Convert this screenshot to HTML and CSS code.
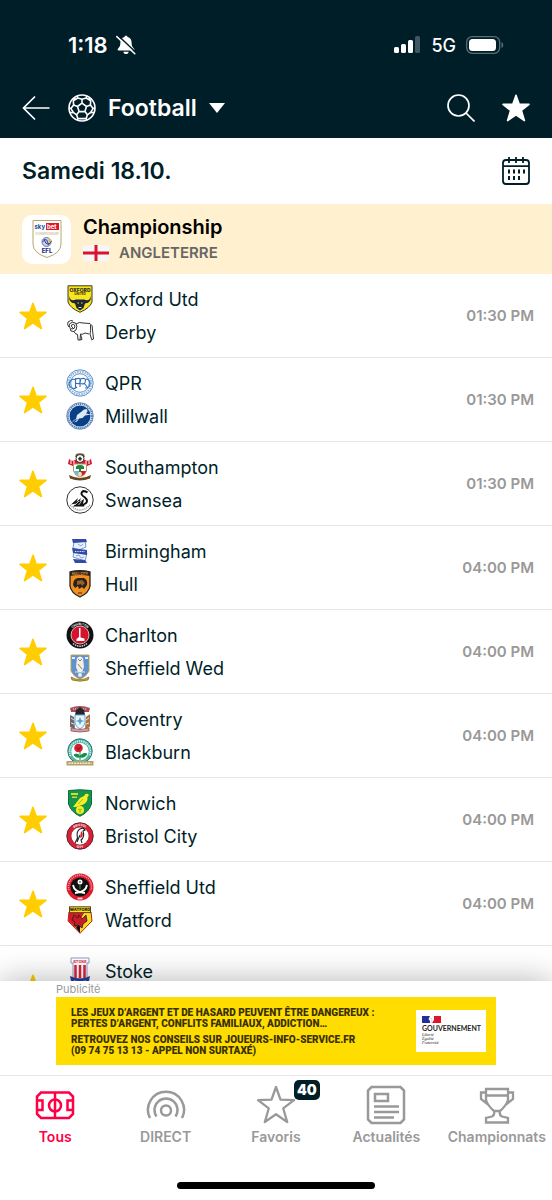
FILE: index.html
```html
<!DOCTYPE html>
<html lang="fr">
<head>
    <meta charset="UTF-8">
    <meta name="viewport" content="width=device-width, initial-scale=1.0">
    <title>Football</title>
    <link rel="stylesheet" href="styles.css">
</head>
<body>
    <svg class="defs" aria-hidden="true">
        <symbol id="star" viewBox="0 0 28 28">
            <path d="M14 1.2 17.2 10.2 27 10.4 19.4 16.4 22.4 26.6 14 20.8 5.6 26.6 8.6 16.4 1 10.4 10.8 10.2Z" stroke-width="1.6" stroke-linejoin="round"/>
        </symbol>
    </svg>

    <header class="header">
        <div class="status-bar">
            <div class="status-time">
                <span>1:18</span>
                <svg width="20" height="20" viewBox="0 0 20 20">
                    <path d="M10 .8c.9 0 1.4.5 1.5 1.2 2.9.7 4.1 2.9 4.1 5.6 0 3.7 1.1 4.7 2.4 6.2.7.8.4 1.7-.7 1.7H2.7c-1.1 0-1.4-.9-.7-1.7C3.3 12.3 4.4 11.3 4.4 7.6c0-2.7 1.2-4.9 4.1-5.6.1-.7.6-1.2 1.5-1.2zM7.3 16.7h5.4c-.3 1.5-1.3 2.3-2.7 2.3s-2.400-.8-2.700-2.300z" fill="#fff"/>
                    <path d="M2 .5 20 17.500" stroke="#001e28" stroke-width="1.600"/>
                    <path d="M.8 1.600 18.800 18.800" stroke="#fff" stroke-width="1.500" stroke-linecap="round"/>
                </svg>
            </div>
            <div class="status-icons">
                <svg width="28" height="18" viewBox="0 0 28 18">
                    <rect x="1" y="11" width="5" height="6" rx="1.500" fill="#fff"/>
                    <rect x="8" y="8" width="5" height="9" rx="1.500" fill="#fff"/>
                    <rect x="15" y="4" width="5" height="13" rx="1.500" fill="#fff"/>
                    <rect x="22" y="0" width="5" height="17" rx="1.500" fill="#405660"/>
                </svg>
                <span>5G</span>
                <svg width="38" height="18" viewBox="0 0 38 18">
                    <rect x=".7" y=".7" width="33" height="16.600" rx="5.500" fill="none" stroke="#596d75" stroke-width="1.300"/>
                    <rect x="3" y="3" width="27" height="12" rx="3.500" fill="#fff"/>
                    <path d="M35.500 6c2.300.7 2.300 5.300 0 6z" fill="#596d75"/>
                </svg>
            </div>
        </div>
        <div class="toolbar">
            <button class="icon-btn" aria-label="Retour">
                <svg width="28" height="28" viewBox="0 0 28 28" fill="none" stroke="#fff" stroke-width="1.700">
                    <path d="M27.500 14H1.500M13 2.500 1.500 14 13 25.500"/>
                </svg>
            </button>
            <button class="sport-btn">
                <svg width="28" height="28" viewBox="0 0 28 28" fill="none" stroke="#fff" stroke-width="1.600" stroke-linejoin="round">
                    <circle cx="14" cy="14" r="13"/>
                    <path d="M14 9.200 18.500 12.500 16.900 17.600H11.100L9.500 12.500ZM14 9.200V5.300M18.500 12.500l3.900-1.400M16.900 17.600l2.500 3.200M11.100 17.600l-2.500 3.200M9.500 12.500 5.600 11.100"/>
                    <path d="M9.200 2.200 9.800 4 14 5.300 18.200 4l.6-1.800M21 3.500l1.700 3.300-.3 4.300 2.700 3.500 1.900-.6M26 18.500l-3.600.1-3 2.200-1.200 3.800.8 1.500M9 26.100l.8-1.500-1.200-3.800-3-2.200-3.600-.1M1 14l1.900.6 2.700-3.500-.3-4.300L7 3.500M9.800 24.600h8.400M9.800 4 5.300 6.800M18.200 4l4.500 2.800M2.900 14.600l2.700 4M25.100 14.600l-2.700 4"/>
                </svg>
                <span>Football</span>
                <svg width="16" height="10" viewBox="0 0 16 10"><path d="M0 0H16L8 10Z" fill="#fff"/></svg>
            </button>
            <div class="toolbar-right">
                <button class="icon-btn" aria-label="Rechercher">
                    <svg width="28" height="28" viewBox="0 0 28 28" fill="none" stroke="#fff" stroke-width="1.700">
                        <circle cx="11.500" cy="11.500" r="10.500"/>
                        <path d="M19 19 27.500 27.500"/>
                    </svg>
                </button>
                <button class="icon-btn white-star" aria-label="Favoris">
                    <svg width="28" height="28"><use href="#star"/></svg>
                </button>
            </div>
        </div>
    </header>

    <main class="content">
        <div class="date-row">
            <h1>Samedi 18.10.</h1>
            <button class="icon-btn" aria-label="Calendrier">
                <svg width="28" height="28" viewBox="0 0 28 28" fill="none" stroke="#001e28" stroke-width="1.800">
                    <path d="M4 3H24Q27 3 27 6V24Q27 27 24 27H4Q1 27 1 24V6Q1 3 4 3ZM1 9.200h26M7 0v6M14 0v6M21 0v6"/>
                    <path d="M7 12.500v4M12 12.500v4M17 12.500v4M22 12.500v4M7 19v4M12 19v4M17 19v4" stroke-width="2"/>
                </svg>
            </button>
        </div>

        <div class="league">
            <div class="league-logo">
                <svg width="30" height="40" viewBox="0 0 30 40">
                    <path d="M1 1.500H29V25Q29 34 15 38.500Q1 34 1 25Z" fill="#fff" stroke="#b7a66a"/>
                    <text x="2.500" y="10" font-size="6" font-weight="700" fill="#174a9c">sky</text>
                    <rect x="14" y="4" width="13" height="7" fill="#e0162b"/>
                    <text x="15" y="10" font-size="6" font-weight="700" fill="#fff">bet</text>
                    <text x="15" y="15.500" font-size="3" text-anchor="middle" fill="#b7a66a">CHAMPIONSHIP</text>
                    <circle cx="14.500" cy="23" r="4.500" fill="#c9d2e8" stroke="#6c79b5"/>
                    <path d="M10.500 23q4-5 5 0 1 4 4-1M12 20q1 5 5 6" stroke="#2c3c94" fill="none"/>
                    <path d="m16 19 4 2-3 3z" fill="#e1bf58"/>
                    <text x="15" y="34" font-size="6" font-weight="800" text-anchor="middle" fill="#23307f">EFL</text>
                </svg>
            </div>
            <div>
                <h2>Championship</h2>
                <p class="country">
                    <svg width="26" height="16" viewBox="0 0 26 16">
                        <rect width="26" height="16" rx="1" fill="#f6f6f6"/>
                        <path d="M13 0V16M0 8H26" stroke="#d9142c" stroke-width="3"/>
                    </svg>
                    <span>ANGLETERRE</span>
                </p>
            </div>
        </div>

        <ul class="matches">
            <li class="match">
                <button class="fav" aria-label="Favori"><svg width="28" height="28"><use href="#star"/></svg></button>
                <div class="teams">
                    <div class="team">
                        <svg class="crest" viewBox="0 0 28 28">
                            <path d="M2 .8H26V17Q24 23 14 27.300Q4 23 2 17Z" fill="#f8e51c" stroke="#3c3a20"/>
                            <text x="14" y="6.500" font-size="5" font-weight="800" text-anchor="middle" fill="#27271d">OXFORD</text>
                            <text x="14" y="9.800" font-size="3" font-weight="700" text-anchor="middle" fill="#27271d">UNITED</text>
                            <path d="M3.500 11Q4 17 10 14.500H18Q24 17 24.500 11 26 18 19 18.500L17.500 23 14 25.500 10.500 23 9 18.500Q2 18 3.500 11Z" fill="#1c2540"/>
                            <path d="M11.500 18h1.500M15 18h1.500M12.500 22.500h3" stroke="#f8e51c"/>
                        </svg>
                        <span>Oxford Utd</span>
                    </div>
                    <div class="team">
                        <svg class="crest" viewBox="0 0 28 28" fill="none" stroke="#333" stroke-width="1">
                            <path d="M10 6Q13 3.500 17 5L24 5.500Q27 7 26.500 12L27.500 21 25 22M24.500 7Q25 13 24 16L25.500 21M23 16 19 15Q16 17 14.500 16L14 22H12L11.500 16.500 9 15.500M14.500 16 16 21.500 14 22M9 15 7.500 13"/>
                            <path d="M7 10Q5 9 5.500 7 8 5 9 8 9 11 6 11 2.500 10 3.500 6 6 3 9.500 5 12 8 10 12L7.500 13.500 5 13 4 10.500M3 9Q.8 7 2 4 5 1.500 7 3"/>
                        </svg>
                        <span>Derby</span>
                    </div>
                </div>
                <time>01:30 PM</time>
            </li>
            <li class="match">
                <button class="fav" aria-label="Favori"><svg width="28" height="28"><use href="#star"/></svg></button>
                <div class="teams">
                    <div class="team">
                        <svg class="crest" viewBox="0 0 28 28" fill="none" stroke="#5b8fc9">
                            <circle cx="14" cy="14" r="13.200" fill="#f4f8fd"/>
                            <circle cx="14" cy="14" r="11.300" stroke="#8fb4de" stroke-width="2" stroke-dasharray="1.500 1"/>
                            <circle cx="14" cy="14" r="9.300" fill="#fff"/>
                            <path d="M9.500 9V19M9.500 10Q15 8 14.500 12T9.500 14M14 10V18M14 10Q20 8 19.500 12T14 14.500M18 14 22 19M10 11A4.500 4.500 0 1 0 11 18M20 10A4.500 4.500 0 0 1 19 19" stroke="#2f70bb" stroke-width="1.100"/>
                        </svg>
                        <span>QPR</span>
                    </div>
                    <div class="team">
                        <svg class="crest" viewBox="0 0 28 28">
                            <circle cx="14" cy="14" r="13.300" fill="#e5edf6" stroke="#6f93bf"/>
                            <circle cx="14" cy="14" r="12" fill="none" stroke="#4c79ae" stroke-width="1.800" stroke-dasharray="1.200 .8"/>
                            <circle cx="14" cy="14" r="10.500" fill="#083f86"/>
                            <path d="M5 21.500 8 18 10 17 11 13 15 10 18 7.500 21 7 21.500 9.500 20 11.500 25 12.500 19 13.500 16.500 16 13 16.500 11 19.500 8 20.500 12 17 9 18Z" fill="#dfe9f3"/>
                        </svg>
                        <span>Millwall</span>
                    </div>
                </div>
                <time>01:30 PM</time>
            </li>
            <li class="match">
                <button class="fav" aria-label="Favori"><svg width="28" height="28"><use href="#star"/></svg></button>
                <div class="teams">
                    <div class="team">
                        <svg class="crest" viewBox="0 0 28 28">
                            <path d="M3 6 7 8 11 6H17L21 8 25 6 26 11 21 13H7L2 11Z" fill="#d7152f"/>
                            <path d="M5 6v5M8 8v5M20 8v5M23 6v5" stroke="#fff"/>
                            <path d="M10 1Q14-.5 18 1L19 4H9Z" fill="#7b5929"/>
                            <circle cx="14" cy="5.500" r="4" fill="#fff" stroke="#333"/>
                            <path d="m14 3.500 2 2-1 2h-2l-1-2z" fill="#333"/>
                            <path d="M7.500 11H20.500V18Q19 23 14 24 9 23 7.500 18Z" fill="#fff" stroke="#b89764"/>
                            <path d="M10 16Q9 12 14 12T18 16H15V19H13V16Z" fill="#18863b"/>
                            <path d="M8 18h5v5Q9 22 8 18" fill="#6cb3df"/><path d="M15 18h5q-1 4-5 5" fill="#d7152f"/>
                            <path d="M3 22Q14 28 25 22L24 25.500Q14 29.500 4 25.500Z" fill="#67471e"/>
                            <circle cx="14" cy="21" r="2" fill="#f4dba4"/>
                        </svg>
                        <span>Southampton</span>
                    </div>
                    <div class="team">
                        <svg class="crest" viewBox="0 0 28 28">
                            <circle cx="14" cy="14" r="13.200" fill="#fff" stroke="#333"/>
                            <path d="M19 18Q23 15 19 11.500 14 8.500 16 6 18 4 21.500 6.500" fill="none" stroke="#111" stroke-width="2"/>
                            <path d="M5 18.500 12 12 10.500 16 15 12 13.500 16 18 13 17 18 20 16 18 20.500H7L10 17.500Z" fill="#111"/>
                            <path d="m9 19 4-4M12.500 19l3-3.500" stroke="#fff" stroke-width=".7"/>
                            <path d="M4 19Q14 29 24 19" fill="none" stroke="#888" stroke-width="1.500" stroke-dasharray="1 1"/>
                        </svg>
                        <span>Swansea</span>
                    </div>
                </div>
                <time>01:30 PM</time>
            </li>
            <li class="match">
                <button class="fav" aria-label="Favori"><svg width="28" height="28"><use href="#star"/></svg></button>
                <div class="teams">
                    <div class="team">
                        <svg class="crest" viewBox="0 0 28 28">
                            <path d="M8 5 19 4 20 10 8 15 7 20 19 24 21 16 7 11Z" fill="#eaf0fb" stroke="#7897d2"/>
                            <path d="M6 2 20 2 21 5 7 6ZM6 11 21 13V18L7 16ZM7 22 19 23 21 26 9 26Z" fill="#2f4da5"/>
                            <path d="M9 14.500h10" stroke="#dfe7fa" stroke-dasharray="1 .7"/>
                            <path d="m12 7 3 2 2-2M10 19l3-1 2 3 3-1" fill="none" stroke="#86a3db"/>
                        </svg>
                        <span>Birmingham</span>
                    </div>
                    <div class="team">
                        <svg class="crest" viewBox="0 0 28 28">
                            <path d="M4 2Q14-.5 24 2V16Q23 23 14 27 5 23 4 16Z" fill="#ef9022" stroke="#2b241b" stroke-width="1.300"/>
                            <path d="M4 2Q14-.5 24 2V6Q14 4 4 6Z" fill="#2b241b"/>
                            <text x="14" y="5" font-size="3" font-weight="700" text-anchor="middle" fill="#e8a04f">HULL CITY</text>
                            <path d="M7 15Q7 9 12 8L18 8Q22 10 21 15L18 19 16 17 13 19 12 16 9 18Z" fill="#2b211b"/>
                            <path d="m11 11 5-1 3 3-3 3-1-2-4 1z" fill="#95602f"/>
                            <path d="M12 23h4" stroke="#7b4a18" stroke-width="1.500"/>
                        </svg>
                        <span>Hull</span>
                    </div>
                </div>
                <time>04:00 PM</time>
            </li>
            <li class="match">
                <button class="fav" aria-label="Favori"><svg width="28" height="28"><use href="#star"/></svg></button>
                <div class="teams">
                    <div class="team">
                        <svg class="crest" viewBox="0 0 28 28">
                            <circle cx="14" cy="14" r="13.500" fill="#111"/>
                            <path id="ring" d="M4 14a10 10 0 0 1 20 0" fill="none"/>
                            <text font-size="3" font-weight="700" text-anchor="middle" fill="#fff"><textPath href="#ring" startOffset="50%">CHARLTON</textPath></text>
                            <path d="M7 22.500Q14 28 21 22.500" fill="none" stroke="#ddd" stroke-width="1.500" stroke-dasharray="1.500 .8"/>
                            <circle cx="14" cy="14" r="9" fill="#d6122d" stroke="#fff" stroke-width=".7"/>
                            <path d="M13 7h1.500v9.500l4 1v2.500h-8v-2l2.500-2z" fill="#fff"/>
                        </svg>
                        <span>Charlton</span>
                    </div>
                    <div class="team">
                        <svg class="crest" viewBox="0 0 28 28">
                            <path d="M5 1H23V17Q21 22 14 25 7 22 5 17Z" fill="#5e93cf" stroke="#b9a45c"/>
                            <path d="M6 3h3v2H6zM19 3h3v2h-3z" fill="#e8eef7"/>
                            <path d="M11 4Q14 1 17 4L18 13 16 18H12L10 13Z" fill="#f2efe7"/>
                            <path d="m12 5 2 2 2-2M12 10l4 5" stroke="#887d69" fill="none"/>
                            <path d="M9 18h10" stroke="#eee"/>
                            <circle cx="14" cy="21" r="2" fill="#f2efe7"/>
                            <path d="M5 23Q14 28 23 23L22 26Q14 28.500 6 26Z" fill="#c8a92f" stroke="#6a5a24" stroke-width=".6"/>
                        </svg>
                        <span>Sheffield Wed</span>
                    </div>
                </div>
                <time>04:00 PM</time>
            </li>
            <li class="match">
                <button class="fav" aria-label="Favori"><svg width="28" height="28"><use href="#star"/></svg></button>
                <div class="teams">
                    <div class="team">
                        <svg class="crest" viewBox="0 0 28 28">
                            <path d="M4 3Q14-1 24 3L23 7H5Z" fill="#a64e5a"/>
                            <path d="M7 4h14" stroke="#f2dddd" stroke-dasharray="1.200 .8"/>
                            <path d="M10 5 14 2 18 5 19 10H9Z" fill="#22252c"/>
                            <path d="M4 10 8 12 9 24 4 22Z" fill="#6b686d"/><path d="M24 9 20 12 19 24 24 22Z" fill="#ad7545"/>
                            <path d="M5 13l3 2M5 18l3 1M23 13l-3 2M23 18l-3 1" stroke="#e8e0da"/>
                            <path d="M9 10h10v8q-1 4-5 6-4-2-5-6z" fill="#e9f4fb" stroke="#67a8d1"/>
                            <path d="m14 12 1.200 3 3 1-3 1L14 20l-1.200-3-3-1 3-1z" fill="#4fa2d5"/>
                            <path d="M5 23q9 3 18 0v3q-9 2-18 0z" fill="#c9a1a4" stroke="#8e3945" stroke-width=".7"/>
                        </svg>
                        <span>Coventry</span>
                    </div>
                    <div class="team">
                        <svg class="crest" viewBox="0 0 28 28">
                            <circle cx="14" cy="13" r="12.200" fill="#54b9ad" stroke="#24736f"/>
                            <path d="M4.500 18A10.500 10.500 0 1 1 23.500 18" fill="none" stroke="#e4f6e6" stroke-width="1.600" stroke-dasharray="1.200 1"/>
                            <circle cx="14" cy="13.500" r="8.700" fill="#fff"/>
                            <path d="M14 13v9M14 18q4-4 7-2-2 4-7 3M13 17q-3-2-5 0 2 3 6 2" fill="#15904a" stroke="#15904a"/>
                            <circle cx="12.500" cy="10" r="4.300" fill="#d5212f"/>
                            <path d="M10 9q3 4 5-1M11 12q3-1 4-3" fill="none" stroke="#8e1420" stroke-width=".8"/>
                            <path d="M.5 23H27.500V27.500H.5Z" fill="#b6a269"/><path d="M2.500 25.300h23" stroke="#f4eccb" stroke-width="1.600" stroke-dasharray="2 .8"/>
                        </svg>
                        <span>Blackburn</span>
                    </div>
                </div>
                <time>04:00 PM</time>
            </li>
            <li class="match">
                <button class="fav" aria-label="Favori"><svg width="28" height="28"><use href="#star"/></svg></button>
                <div class="teams">
                    <div class="team">
                        <svg class="crest" viewBox="0 0 28 28">
                            <path d="M2.500 1.500Q14 0 25.500 1.500V15Q23 23 14 27.300 5 23 2.500 15Z" fill="#16944b" stroke="#0c703a"/>
                            <path d="M5 4h7v2H5zM6 7.500h5v1.500H6z" fill="#d5dc2b"/>
                            <path d="M7 18 14 9 18 7Q20 3 23 6L21.500 8Q22 14 16 16L10 18Z" fill="#f7ee22"/>
                            <path d="m12 15 5-5" stroke="#9abb2d"/>
                            <circle cx="14" cy="21" r="4" fill="#f7ee22"/><path d="M12 20q2 2 4 0M14 21v3" fill="none" stroke="#8eae2a"/>
                        </svg>
                        <span>Norwich</span>
                    </div>
                    <div class="team">
                        <svg class="crest" viewBox="0 0 28 28">
                            <circle cx="14" cy="14" r="13.200" fill="#df1e32" stroke="#5d2028"/>
                            <path id="ring-top" d="M4 14a10 10 0 0 1 20 0" fill="none"/>
                            <path id="ring-bottom" d="M2 14a12 12 0 0 0 24 0" fill="none"/>
                            <text font-size="3" font-weight="700" text-anchor="middle" fill="#fff"><textPath href="#ring-top" startOffset="50%">BRISTOL</textPath></text>
                            <text font-size="3" font-weight="700" text-anchor="middle" fill="#fff"><textPath href="#ring-bottom" startOffset="50%">CITY</textPath></text>
                            <circle cx="14" cy="14" r="9" fill="#fff" stroke="#5d2028" stroke-width=".6"/>
                            <path d="M9 21 11.500 16Q10 9 14 7L17 6 19 8 17 9Q19 15 15 18L16 21M11 20l3-7" fill="none" stroke="#222" stroke-width="1.100"/>
                            <path d="M15 9q3 3 1 6l-2 1z" fill="#df1e32"/>
                        </svg>
                        <span>Bristol City</span>
                    </div>
                </div>
                <time>04:00 PM</time>
            </li>
            <li class="match">
                <button class="fav" aria-label="Favori"><svg width="28" height="28"><use href="#star"/></svg></button>
                <div class="teams">
                    <div class="team">
                        <svg class="crest" viewBox="0 0 28 28">
                            <circle cx="14" cy="14" r="13.500" fill="#df1b31"/>
                            <path d="M3 17A11.500 11.500 0 1 1 25 17" fill="none" stroke="#f5a8ae" stroke-width="1.600" stroke-dasharray="1 1"/>
                            <path d="M11.500 25.500h5" stroke="#f9d7d9" stroke-width="1.800"/>
                            <circle cx="14" cy="14" r="9.600" fill="#111"/>
                            <path d="M7 12Q8 19 19 20M21 12Q20 19 9 20" fill="none" stroke="#fff" stroke-width="1.800"/>
                            <circle cx="14" cy="9" r="2.500" fill="#fff"/><circle cx="14" cy="9" r="1" fill="#777"/>
                            <path d="M14 12v4" stroke="#5b9a54"/>
                        </svg>
                        <span>Sheffield Utd</span>
                    </div>
                    <div class="team">
                        <svg class="crest" viewBox="0 0 28 28">
                            <path d="M3 6H25L26 15 14 27.300 2 15Z" fill="#f6dd1d" stroke="#b71c29"/>
                            <path d="M3 7H18L10 22 2.500 15Z" fill="#d7182a"/><path d="m14 15-4 7 4 5V16z" fill="#111"/>
                            <path d="m8 9 4 3 1-3 3 4 4-4 1 6-4 3-1 4-4-3-4 1 1-4-3-2z" fill="#c71d28" stroke="#272019" stroke-width=".8"/>
                            <rect x="3.500" y=".8" width="21" height="5.800" fill="#f6dd1d" stroke="#5d431c"/>
                            <text x="14" y="5.200" font-size="4" font-weight="800" text-anchor="middle" fill="#111">WATFORD</text>
                        </svg>
                        <span>Watford</span>
                    </div>
                </div>
                <time>04:00 PM</time>
            </li>
            <li class="match">
                <button class="fav" aria-label="Favori"><svg width="28" height="28"><use href="#star"/></svg></button>
                <div class="teams">
                    <div class="team">
                        <svg class="crest" viewBox="0 0 28 28">
                            <path d="M5 1H23V6H21V22H7V6H5Z" fill="#fff" stroke="#8d9bc4"/>
                            <text x="14" y="5.500" font-size="4" font-weight="700" text-anchor="middle" fill="#d4223c">STOKE</text>
                            <path d="M9.500 8V21M14 8V21M18.500 8V21" stroke="#d4223c" stroke-width="2.500"/>
                            <path d="M4 19Q14 24 24 19L23 24Q14 29 5 24Z" fill="#293d8f"/>
                            <path d="M8 23.500q6 2 12 0" fill="none" stroke="#c4cceb" stroke-dasharray="1 .8"/>
                        </svg>
                        <span>Stoke</span>
                    </div>
                    <div class="team"></div>
                </div>
                <time>04:00 PM</time>
            </li>
        </ul>
    </main>

    <aside class="ad">
        <div class="ad-inner">
            <small>Publicité</small>
            <a href="#" class="banner">
                <div class="banner-text">
                    <p>LES JEUX D’ARGENT ET DE HASARD PEUVENT ÊTRE DANGEREUX :<br>PERTES D’ARGENT, CONFLITS FAMILIAUX, ADDICTION…</p>
                    <p>RETROUVEZ NOS CONSEILS SUR JOUEURS-INFO-SERVICE.FR<br>(09 74 75 13 13 - APPEL NON SURTAXÉ)</p>
                </div>
                <div class="gov">
                    <svg width="20" height="7" viewBox="0 0 20 7">
                        <path d="M0 0H8L6.500 3 8 5V7H0Z" fill="#24309a"/>
                        <path d="M12 0H19V7H10L12 4Z" fill="#e1142d"/>
                        <path d="M8 2q2 0 2 2l-1 3" fill="none" stroke="#bbb" stroke-width=".6"/>
                    </svg>
                    <b>GOUVERNEMENT</b>
                    <i>Liberté<br>Égalité<br>Fraternité</i>
                </div>
            </a>
        </div>
    </aside>

    <nav class="tabs">
        <div class="tab-list">
            <a href="#" class="tab active">
                <svg width="40" height="40" viewBox="0 0 40 40" fill="none" stroke="currentColor" stroke-width="2.500">
                    <path d="M6 7.500H34L38 11.500V29L34 33H6L2 29V11.500ZM20 7V33M2 15.500H7.500V25H2M38 15.500H32.500V25H38"/>
                    <circle cx="20" cy="20.500" r="6"/>
                </svg>
                <span>Tous</span>
            </a>
            <a href="#" class="tab">
                <svg width="40" height="40" viewBox="0 0 40 40" fill="none" stroke="currentColor" stroke-width="2.500">
                    <circle cx="20" cy="25.500" r="5"/>
                    <path d="M10.500 31.500A11.500 11.500 0 1 1 29.500 31.500M4 33A18 18 0 1 1 36 33"/>
                </svg>
                <span>DIRECT</span>
            </a>
            <a href="#" class="tab">
                <div class="tab-icon">
                    <svg width="40" height="40" viewBox="0 0 40 40" fill="none" stroke="currentColor" stroke-width="2.300" stroke-linejoin="round">
                        <path d="M20 2 24.500 14.700 38 15.200 27.200 23.300 31.200 37 20 29.200 8.800 37 12.800 23.300 2 15.200 15.500 14.700Z"/>
                    </svg>
                    <b class="badge">40</b>
                </div>
                <span>Favoris</span>
            </a>
            <a href="#" class="tab">
                <svg width="40" height="40" viewBox="0 0 40 40" fill="none" stroke="currentColor" stroke-width="2.500">
                    <path d="M5.500 2H34.500L38 5.500V34.500L34.500 38H5.500L2 34.500V5.500ZM9 9H22V16H9ZM8 21.500H33M8 27H33M8 32.500H28"/>
                </svg>
                <span>Actualités</span>
            </a>
            <a href="#" class="tab">
                <svg width="40" height="40" viewBox="0 0 40 40" fill="none" stroke="currentColor" stroke-width="2.300">
                    <path d="M9 4H31V15Q29 21 23 26H17Q11 21 9 15ZM9 10.500H31M9 7.500H4V14L11 19.500M31 7.500H36V14L29 19.500M17 26Q18 30 15 31.500L9 33V37.500H31V33L25 31.500Q22 30 23 26"/>
                </svg>
                <span>Championnats</span>
            </a>
        </div>
        <div class="home-bar"></div>
    </nav>
</body>
</html>
```

FILE: styles.css
```css
* {
    box-sizing: border-box;
}

body {
    margin: 0;
    height: 100vh;
    display: flex;
    flex-direction: column;
    background-color: #fff;
    color: #001e28;
    font-family: Inter, "Liberation Sans", sans-serif;
}

h1, h2, p, ul {
    margin: 0;
    padding: 0;
}

button {
    padding: 0;
    border: none;
    background: none;
    color: inherit;
    font: inherit;
    cursor: pointer;
}

a {
    color: inherit;
    text-decoration: none;
}

svg {
    display: block;
    flex: none;
}

.defs {
    position: absolute;
    width: 0;
    height: 0;
}

/* Header */
.header {
    background-color: #001e28;
    color: #fff;
}

.status-bar {
    display: flex;
    justify-content: space-between;
    align-items: center;
    height: 77px;
    padding: 13px 48px 0 68px;
}

.status-time, .status-icons {
    display: flex;
    align-items: center;
}

.status-time {
    gap: 8px;
    font-size: 22px;
    font-weight: 600;
}

.status-icons {
    gap: 10px;
    font-size: 18px;
    font-weight: 500;
}

.toolbar {
    display: flex;
    align-items: center;
    height: 61px;
    padding: 0 22px;
    gap: 18px;
}

.sport-btn {
    display: flex;
    align-items: center;
    gap: 12px;
    font-size: 23px;
    font-weight: 600;
}

.toolbar-right {
    display: flex;
    gap: 27px;
    margin-left: auto;
}

.white-star {
    fill: #fff;
    stroke: #fff;
}

/* Match list */
.content {
    flex: 1;
    min-height: 0;
    overflow: hidden;
}

.date-row {
    display: flex;
    justify-content: space-between;
    align-items: center;
    height: 66px;
    padding: 0 22px;
}

.date-row h1 {
    font-size: 23px;
    font-weight: 600;
}

.league {
    display: flex;
    align-items: center;
    gap: 12px;
    height: 70px;
    padding: 0 22px;
    background-color: #fff0cf;
}

.league-logo {
    display: flex;
    align-items: center;
    justify-content: center;
    width: 49px;
    height: 49px;
    border-radius: 10px;
    background-color: #fff;
}

.league h2 {
    color: #000;
    font-size: 20px;
    font-weight: 600;
    line-height: 28px;
}

.country {
    display: flex;
    align-items: center;
    gap: 10px;
    color: #666;
    font-size: 15px;
    font-weight: 600;
    line-height: 24px;
}

.matches {
    list-style: none;
}

.match {
    display: flex;
    align-items: center;
    height: 84px;
    padding: 0 18px 0 19px;
    border-bottom: 1px solid #e6e6e6;
}

.fav {
    fill: #ffcd00;
    stroke: #ffcd00;
}

.teams {
    flex: 1;
    margin-left: 19px;
}

.team {
    display: flex;
    align-items: center;
    gap: 11px;
    height: 33px;
    font-size: 18px;
}

.crest {
    width: 28px;
    height: 28px;
}

.match time {
    color: #999;
    font-size: 15px;
    font-weight: 600;
}

/* Ad banner */
.ad {
    position: relative;
    padding: 1px 56px 10px;
    background-color: #fff;
    box-shadow: 0 0 32px rgba(0, 0, 0, 0.3);
}

.ad-inner {
    max-width: 440px;
    margin: 0 auto;
}

.ad small {
    display: block;
    color: #999;
    font-size: 11px;
    line-height: 15px;
}

.banner {
    display: flex;
    align-items: center;
    justify-content: space-between;
    height: 68px;
    padding: 0 10px 0 15px;
    background-color: #fd0;
    color: #3a3000;
}

.banner-text {
    display: flex;
    flex-direction: column;
    gap: 5px;
    font-family: Roboto, sans-serif;
    font-size: 10px;
    font-weight: 900;
    line-height: 11px;
    white-space: nowrap;
}

.gov {
    width: 70px;
    height: 42px;
    padding: 6px;
    background-color: #fff;
    color: #222;
}

.gov b, .gov i {
    display: block;
}

.gov b {
    margin-top: 1px;
    font-family: Lato, sans-serif;
    font-size: 7px;
    line-height: 9px;
}

.gov i {
    font-family: "Liberation Serif", serif;
    font-size: 4px;
    line-height: 4px;
}

/* Bottom tabs */
.tabs {
    position: relative;
    height: 125px;
    padding-top: 9px;
    border-top: 1px solid #e6e6e6;
    background-color: #fff;
}

.tab-list {
    display: grid;
    grid-template-columns: repeat(5, 1fr);
}

.tab {
    display: flex;
    flex-direction: column;
    align-items: center;
    gap: 2px;
    color: #999;
    font-size: 14px;
    font-weight: 600;
    line-height: 20px;
}

.tab.active {
    color: #ff0046;
}

.tab-icon {
    position: relative;
}

.badge {
    position: absolute;
    top: -5px;
    left: 38px;
    padding: 0 3px;
    border-radius: 5px;
    background-color: #001e28;
    color: #fff;
    font-size: 14px;
    line-height: 20px;
}

.home-bar {
    width: 36%;
    height: 7px;
    margin: 35px auto 0;
    border-radius: 4px;
    background-color: #000;
}
```
